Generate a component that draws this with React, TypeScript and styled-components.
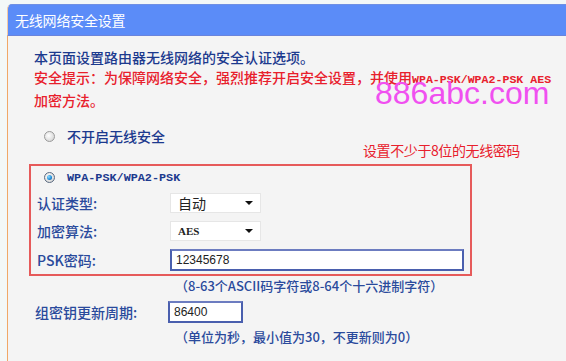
import React from "react";
import styled, { createGlobalStyle, css } from "styled-components";

const Global = createGlobalStyle`
  html, body { margin: 0; padding: 0; background: #f3f8f8; }
  body { width: 566px; height: 361px; overflow: hidden; font-family: "Noto Sans CJK SC", "Noto Sans", sans-serif; }
`;

const Page = styled.div`
  padding: 4px 0 0 7px;
  height: 361px;
  box-sizing: border-box;
`;

const Panel = styled.div`
  position: relative;
  height: 100%;
  display: flex;
  flex-direction: column;
`;

const Header = styled.div`
  height: 32px;
  box-sizing: border-box;
  background: #5b8cf8;
  border-top: 1px solid #6f90e4;
  border-bottom: 1px solid #6a84dc;
  border-left: 1px solid #f3c9a6;
  border-top-left-radius: 5px;
  color: #ffffff;
  font-size: 14px;
  line-height: 30px;
  padding-left: 7px;
  letter-spacing: -0.2px;
`;

const Content = styled.div`
  flex: 1;
  background: #f4f4f4;
  border-left: 1px solid #f0a868;
  padding: 11px 0 0 21px;
`;

const Intro = styled.div`
  padding-left: 5px;
  font-size: 14px;
  line-height: 20px;
  font-weight: 500;
`;

const Line = styled.div<{ $tone: "navy" | "red" }>`
  color: ${(p) => (p.$tone === "red" ? "#e8202c" : "#1c3a8e")};
  white-space: nowrap;
`;

const Mono = styled.span`
  font-family: "Liberation Mono", "DejaVu Sans Mono", monospace;
  font-weight: bold;
  font-size: 11.6px;
`;

const RadioRow = styled.div<{ $inset: number; $h: number; $top?: number }>`
  display: flex;
  align-items: center;
  gap: 12px;
  padding-left: ${(p) => p.$inset}px;
  margin-top: ${(p) => p.$top ?? 0}px;
  height: ${(p) => p.$h}px;
  font-size: 14px;
  font-weight: 500;
  color: #1c3a8e;
`;

const Radio = styled.span<{ $checked?: boolean }>`
  width: 11px;
  height: 11px;
  border-radius: 50%;
  box-sizing: border-box;
  border: 1px solid #9a9a9a;
  background: radial-gradient(circle at 40% 40%, #ffffff 0%, #e0e0e0 60%, #c8c8c8 100%);
  display: inline-flex;
  align-items: center;
  justify-content: center;
  ${(p) =>
    p.$checked &&
    css`
      border-color: #5a6a80;
      &::after {
        content: "";
        width: 5px;
        height: 5px;
        border-radius: 50%;
        background: radial-gradient(circle at 35% 35%, #8fdcff 0%, #1a8ad8 60%, #0b4a8a 100%);
      }
    `}
`;

const RadioLabel = styled.span<{ $mono?: boolean }>`
  ${(p) =>
    p.$mono &&
    css`
      font-family: "Liberation Mono", "DejaVu Sans Mono", monospace;
      font-weight: bold;
      font-size: 11.8px;
      color: #1c3a8e;
    `}
`;

const Box = styled.div`
  width: 443px;
  box-sizing: border-box;
  border: 2px solid #e65a5a;
  padding: 0 0 0 6px;
  margin-top: 18px;
`;

const FieldRow = styled.div<{ $h: number }>`
  display: grid;
  grid-template-columns: 133px auto;
  align-items: center;
  height: ${(p) => p.$h}px;
`;

const Label = styled.span`
  font-size: 14px;
  font-weight: 500;
  color: #2a4a9c;
  white-space: nowrap;
`;

const Select = styled.div<{ $mono?: boolean }>`
  width: 91px;
  height: 20px;
  box-sizing: border-box;
  background: #ffffff;
  border: 1px solid #e6e6e6;
  display: flex;
  align-items: center;
  justify-content: space-between;
  padding: 0 7px 0 7px;
  font-size: 14px;
  color: #222;
  ${(p) =>
    p.$mono &&
    css`
      font-family: "Liberation Serif", serif;
      font-weight: bold;
      font-size: 11px;
    `}
`;

const Arrow = styled.span`
  width: 0;
  height: 0;
  border-left: 4px solid transparent;
  border-right: 4px solid transparent;
  border-top: 4px solid #111;
`;

const Input = styled.div<{ $w: number }>`
  width: ${(p) => p.$w}px;
  height: 22px;
  box-sizing: border-box;
  background: #ffffff;
  border: 2px solid #4a5fae;
  border-top-color: #6c7cc0;
  display: flex;
  align-items: center;
  padding-left: 4px;
  font-family: "Liberation Sans", Arial, sans-serif;
  font-size: 12px;
  color: #222;
`;

const Hint = styled.div<{ $top: number }>`
  padding-left: 146px;
  margin-top: ${(p) => p.$top}px;
  font-size: 13px;
  line-height: 18px;
  font-weight: 500;
  color: #2a4a9c;
  white-space: nowrap;
`;

const Plain = styled.div`
  padding-left: 6px;
  margin-top: 4px;
`;

const Watermark = styled.div`
  position: absolute;
  left: 368px;
  top: 73px;
  font-family: "Liberation Sans", Arial, sans-serif;
  font-size: 32px;
  line-height: 32px;
  color: #f050f0;
  pointer-events: none;
`;

const Note = styled.div`
  position: absolute;
  left: 356px;
  top: 136px;
  font-size: 14px;
  line-height: 20px;
  color: #e8202c;
  letter-spacing: -0.4px;
`;

export default function App() {
  return (
    <>
      <Global />
      <Page>
        <Panel>
          <Header>无线网络安全设置</Header>
          <Content>
            <Intro>
              <Line $tone="navy">本页面设置路由器无线网络的安全认证选项。</Line>
              <Line $tone="red">
                安全提示：为保障网络安全，强烈推荐开启安全设置，并使用<Mono>WPA-PSK/WPA2-PSK AES</Mono>
              </Line>
              <Line $tone="red">加密方法。</Line>
            </Intro>
            <RadioRow $inset={15} $h={20} $top={16}>
              <Radio />
              <span>不开启无线安全</span>
            </RadioRow>
            <Box>
              <RadioRow $inset={7} $h={23}>
                <Radio $checked />
                <RadioLabel $mono>WPA-PSK/WPA2-PSK</RadioLabel>
              </RadioRow>
              <FieldRow $h={28}>
                <Label>认证类型:</Label>
                <Select>
                  <span>自动</span>
                  <Arrow />
                </Select>
              </FieldRow>
              <FieldRow $h={28}>
                <Label>加密算法:</Label>
                <Select $mono>
                  <span>AES</span>
                  <Arrow />
                </Select>
              </FieldRow>
              <FieldRow $h={29}>
                <Label>PSK密码:</Label>
                <Input $w={294}>12345678</Input>
              </FieldRow>
            </Box>
            <Hint $top={1}>（8-63个ASCII码字符或8-64个十六进制字符）</Hint>
            <Plain>
              <FieldRow $h={26}>
                <Label>组密钥更新周期:</Label>
                <Input $w={75}>86400</Input>
              </FieldRow>
            </Plain>
            <Hint $top={3}>（单位为秒，最小值为30，不更新则为0）</Hint>
          </Content>
          <Watermark>886abc.com</Watermark>
          <Note>设置不少于8位的无线密码</Note>
        </Panel>
      </Page>
    </>
  );
}
